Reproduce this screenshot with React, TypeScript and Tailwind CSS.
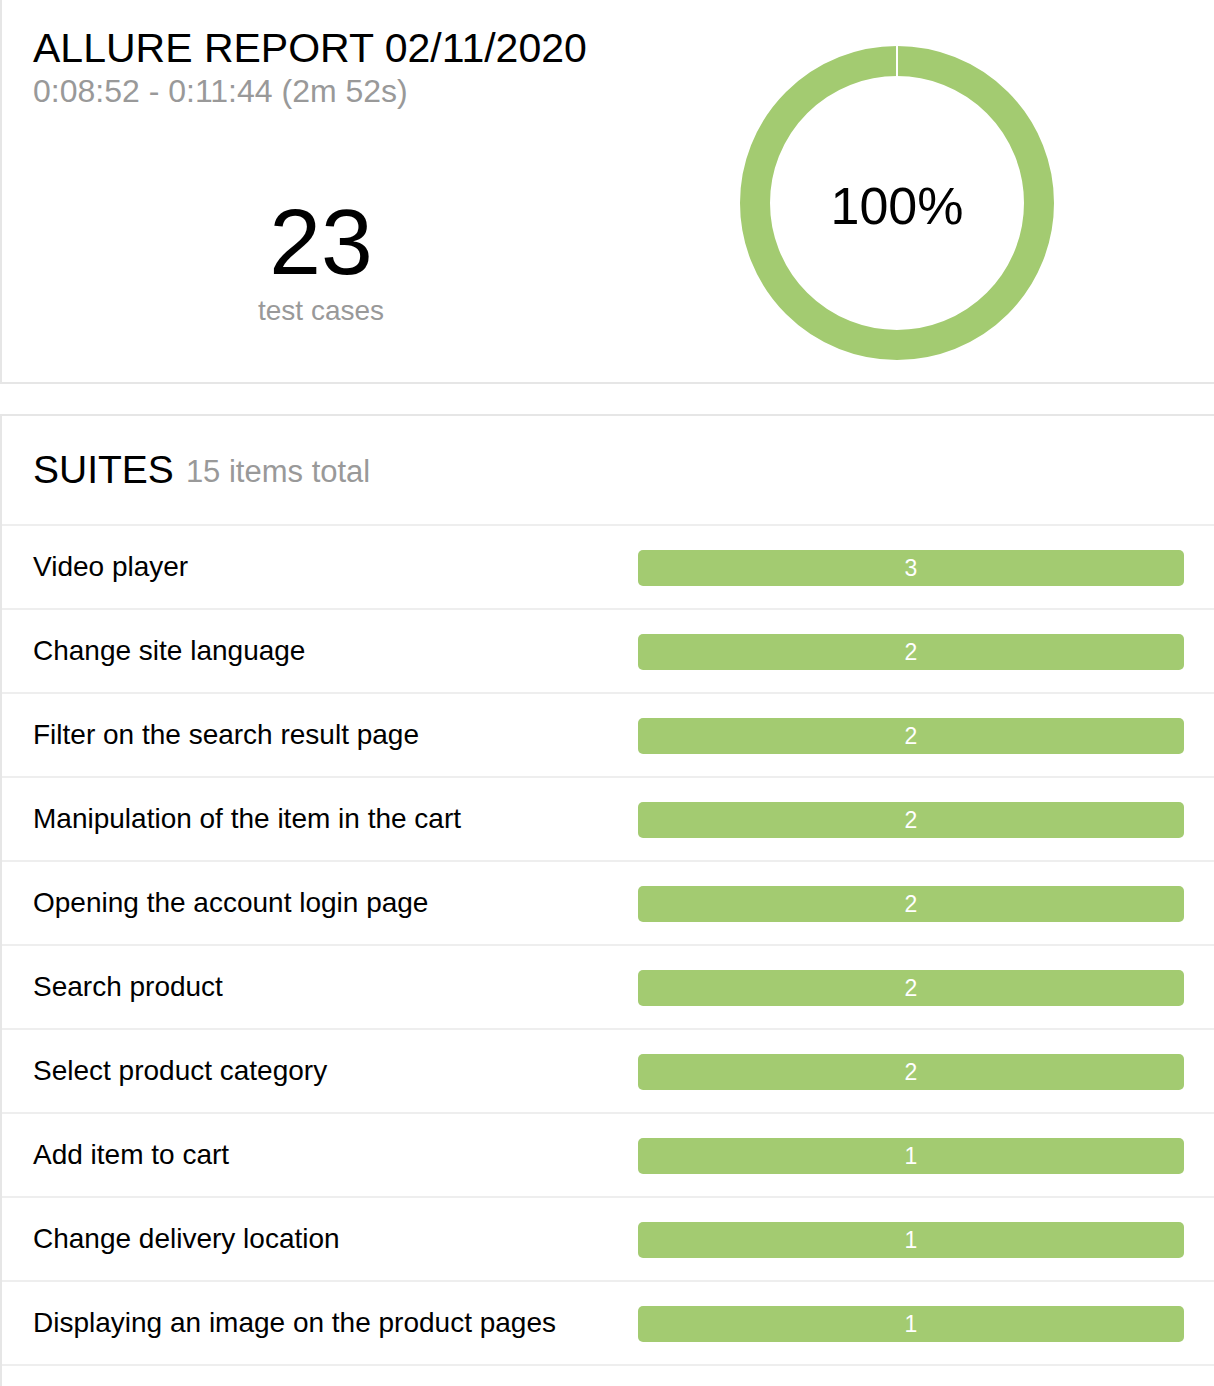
const suites = [
  { name: 'Video player', count: 3 },
  { name: 'Change site language', count: 2 },
  { name: 'Filter on the search result page', count: 2 },
  { name: 'Manipulation of the item in the cart', count: 2 },
  { name: 'Opening the account login page', count: 2 },
  { name: 'Search product', count: 2 },
  { name: 'Select product category', count: 2 },
  { name: 'Add item to cart', count: 1 },
  { name: 'Change delivery location', count: 1 },
  { name: 'Displaying an image on the product pages', count: 1 },
]

function Donut() {
  const size = 320
  const c = size / 2
  return (
    <svg width={size} height={size} viewBox={`0 0 ${size} ${size}`}>
      <circle cx={c} cy={c} r={142} fill="none" stroke="#a3cb71" strokeWidth={30} />
      <line x1={c} y1={c - 158} x2={c} y2={c - 126} stroke="#ffffff" strokeWidth={2} />
      <text
        x={c}
        y={c + 21}
        textAnchor="middle"
        fontSize={52}
        fill="#000000"
        fontFamily="'Liberation Sans', Arial, sans-serif"
      >
        100%
      </text>
    </svg>
  )
}

export default function App() {
  return (
    <div className="bg-white min-h-screen font-['Liberation_Sans',Arial,sans-serif] text-black">
      {/* Summary */}
      <div className="flex h-[384px] border-l-2 border-b-2 border-[#e6e6e6]">
        <div className="w-[638px] flex flex-col">
          <div className="pl-[31px] pt-[25px]">
            <div className="text-[41px] leading-[46px]">ALLURE REPORT 02/11/2020</div>
            <div className="text-[32px] leading-[34px] text-[#999999] mt-[3px]">0:08:52 - 0:11:44 (2m 52s)</div>
          </div>
          <div className="flex flex-col items-center mt-[86px]">
            <div className="text-[93px] leading-[96px]">23</div>
            <div className="text-[28px] leading-[30px] text-[#999999] mt-[6px]">test cases</div>
          </div>
        </div>
        <div className="w-[514px] flex justify-center pt-[43px]">
          <Donut />
        </div>
      </div>

      {/* Suites */}
      <div className="mt-[30px] border-l-2 border-t-2 border-[#e6e6e6]">
        <div className="h-[110px] flex items-center pl-[31px] border-b-2 border-[#eeeeee]">
          <span className="text-[39px] leading-[44px]">SUITES</span>
          <span className="text-[31px] leading-[44px] text-[#999999] ml-[12px] mt-[4px]">15 items total</span>
        </div>
        {suites.map((s) => (
          <div key={s.name} className="h-[84px] flex items-center border-b-2 border-[#eeeeee]">
            <div className="w-[636px] pl-[31px] text-[28px] leading-[32px]">{s.name}</div>
            <div className="flex-1 mr-[30px] h-[36px] mt-[2px] rounded-[5px] bg-[#a3cb71] flex items-center justify-center text-white text-[23px] leading-none">
              {s.count}
            </div>
          </div>
        ))}
        <div className="h-[40px]" />
      </div>
    </div>
  )
}
